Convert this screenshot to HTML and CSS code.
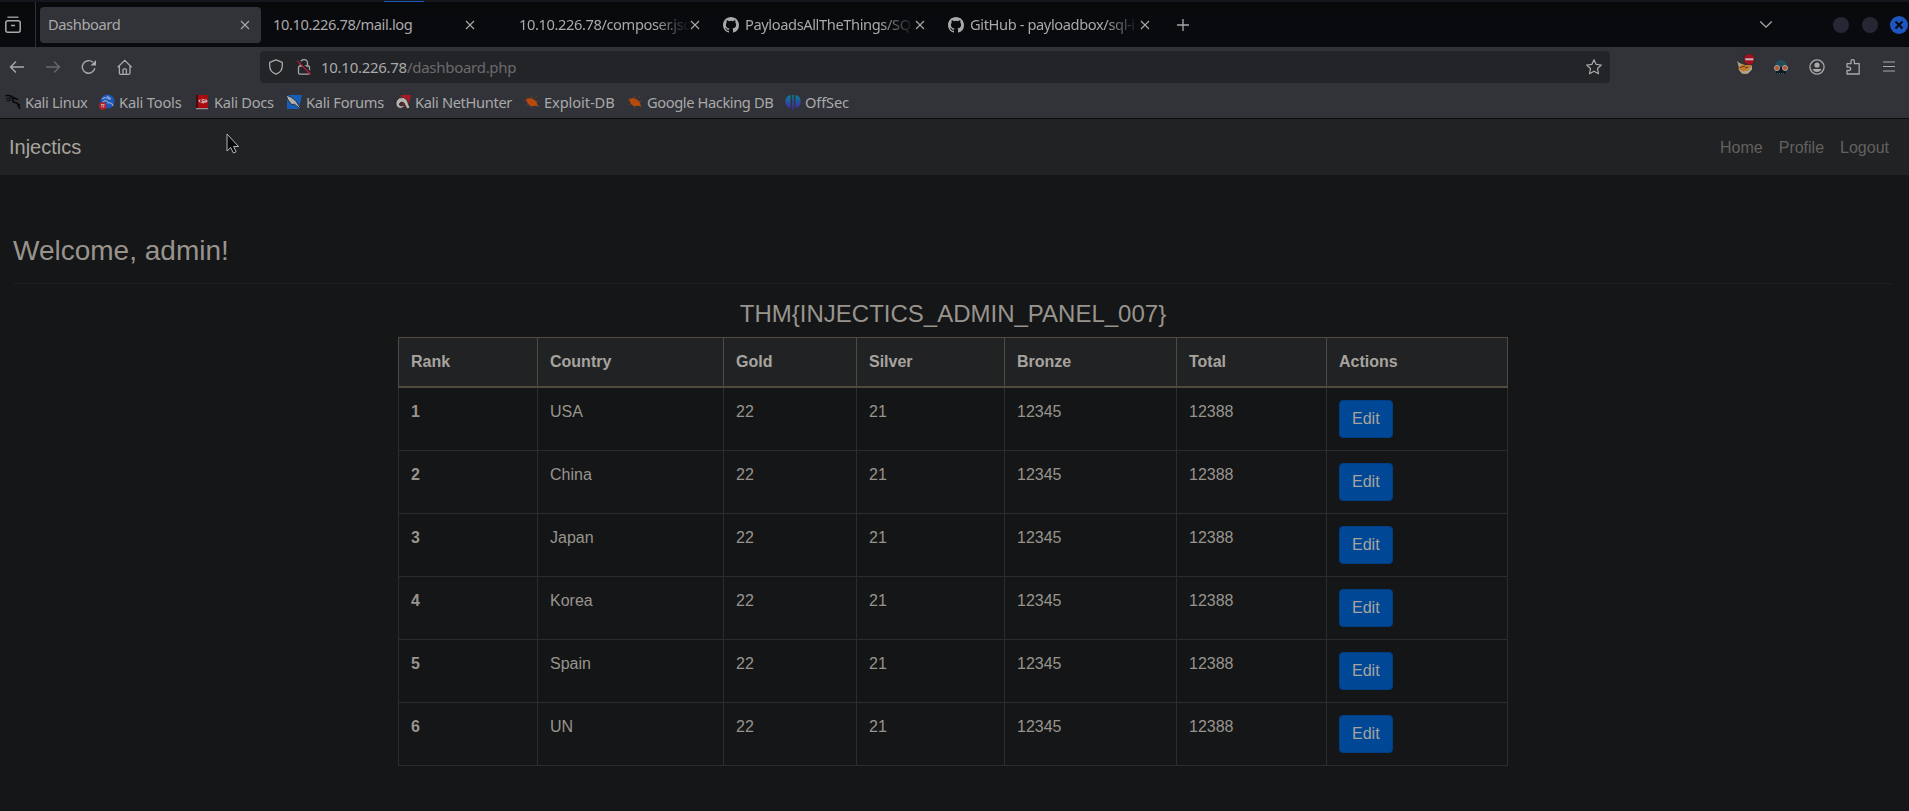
FILE: index.html
```html
<!DOCTYPE html>
<html lang="en">
<head>
<meta charset="utf-8">
<title>Dashboard</title>
<link rel="stylesheet" href="styles.css">
</head>
<body>
<svg class="defs" width="0" height="0">
  <symbol id="close" viewBox="0 0 10 10"><path d="M1 1l8 8M9 1L1 9" fill="none" stroke="currentColor" stroke-width="1.1"/></symbol>
  <symbol id="github" viewBox="0 0 16 16"><path fill="currentColor" d="M8 0C3.58 0 0 3.58 0 8c0 3.54 2.29 6.53 5.47 7.59.4.07.55-.17.55-.38 0-.19-.01-.82-.01-1.49-2.01.37-2.53-.49-2.69-.94-.09-.23-.48-.94-.82-1.13-.28-.15-.68-.52-.01-.53.63-.01 1.08.58 1.23.82.72 1.21 1.87.87 2.33.66.07-.52.28-.87.51-1.07-1.78-.2-3.64-.89-3.64-3.95 0-.87.31-1.59.82-2.15-.08-.2-.36-1.02.08-2.12 0 0 .67-.21 2.2.82a7.6 7.6 0 0 1 4 0c1.53-1.04 2.2-.82 2.2-.82.44 1.1.16 1.92.08 2.12.51.56.82 1.27.82 2.15 0 3.07-1.87 3.75-3.65 3.95.29.25.54.73.54 1.48 0 1.07-.01 1.93-.01 2.2 0 .21.15.46.55.38A8.01 8.01 0 0 0 16 8c0-4.42-3.58-8-8-8z"/></symbol>
  <symbol id="bug" viewBox="0 0 16 16"><g fill="none" stroke="#75401f" stroke-width=".8"><path d="M2 3l3 3M0 6l5 1M2 11l3-2M7 2l1 3M11 4l2-2M12 8l3-1M12 11l3 2M7 12l1 2"/></g><path fill="#b64a0d" d="M2 5.500L5.500 4l4 1.200 3 2.600 1.500 4.400-3.500-.4-3.500.4L4 10z"/></symbol>
</svg>

<div class="tabstrip">
  <div class="recent"><svg width="18" height="18" viewBox="0 0 18 18" fill="none" stroke="currentColor" stroke-width="1.500"><path d="M3.500 1.200h11" stroke-width="1.300"/><rect x="1.800" y="4.700" width="14.400" height="11.600" rx="2"/><path d="M7 9.500h4"/></svg></div>
  <div class="tab active"><span class="label">Dashboard</span><svg class="x"><use href="#close"/></svg></div>
  <div class="tab"><span class="label">10.10.226.78/mail.log</span><svg class="x"><use href="#close"/></svg></div>
  <div class="tab indent"><span class="label fade">10.10.226.78/composer.jso</span><svg class="x"><use href="#close"/></svg></div>
  <div class="tab"><svg class="fav"><use href="#github"/></svg><span class="label fade">PayloadsAllTheThings/SQ</span><svg class="x"><use href="#close"/></svg></div>
  <div class="tab"><svg class="fav"><use href="#github"/></svg><span class="label fade">GitHub - payloadbox/sql-i</span><svg class="x"><use href="#close"/></svg></div>
  <svg class="plus" width="14" height="14" viewBox="0 0 14 14"><path d="M7 1v12M1 7h12" stroke="currentColor" stroke-width="1.300"/></svg>
  <div class="winctl">
    <svg class="chev" width="14" height="9" viewBox="0 0 14 9" fill="none" stroke="currentColor" stroke-width="1.300"><path d="M1.300 1.500L7 7.200l5.700-5.700"/></svg>
    <i class="dot"></i><i class="dot"></i>
    <i class="dot closewin"><svg width="10" height="10" viewBox="0 0 10 10"><path d="M1.500 1.500l7 7M8.500 1.500l-7 7" stroke="#070a14" stroke-width="2"/></svg></i>
  </div>
</div>

<div class="toolbar">
  <div class="navicons">
    <svg width="16" height="16" viewBox="0 0 16 16" fill="none" stroke="currentColor" stroke-width="1.400"><path d="M15 8H1.500M7 2.500L1.500 8 7 13.500"/></svg>
    <svg class="off" width="16" height="16" viewBox="0 0 16 16" fill="none" stroke="currentColor" stroke-width="1.400"><path d="M1 8h13.500M9 2.500L14.500 8 9 13.500"/></svg>
    <svg width="16" height="16" viewBox="0 0 16 16"><path d="M13.800 9.200A6.300 6.300 0 1 1 11.900 3.300" fill="none" stroke="currentColor" stroke-width="1.400"/><path d="M15 1v5.500H9.500z" fill="currentColor"/></svg>
    <svg width="16" height="16" viewBox="0 0 16 16" fill="none" stroke="currentColor" stroke-width="1.300"><path d="M.700 8.300L7.700 1.300l7 7M2.400 7v7q0 1.300 1.300 1.300h8q1.300 0 1.300-1.300V7M6 15v-4.200q0-1 1-1h1.400q1 0 1 1V15"/></svg>
  </div>
  <div class="urlbar">
    <svg width="16" height="16" viewBox="0 0 16 16" fill="none" stroke="currentColor" stroke-width="1.300"><path d="M8 .900l6.300 2.500v3.300C14.300 10.500 12 13.700 8 15.200 4 13.700 1.700 10.500 1.700 6.700V3.400z" stroke-linejoin="round"/></svg>
    <svg class="lock" width="16" height="16" viewBox="0 0 16 16" fill="none"><path d="M4.500 7V4a3.500 3.500 0 0 1 7 0v3" stroke="#a5a5a6" stroke-width="1.300"/><rect x="2.500" y="7" width="11" height="8.200" rx="1.500" stroke="#a5a5a6" stroke-width="1.300"/><path d="M2 1L15 14" stroke="#232428" stroke-width="2"/><path d="M1 1.700L14.800 15.500" stroke="#c01838" stroke-width="1.200"/></svg>
    <span class="url">10.10.226.78<b>/dashboard.php</b></span>
    <svg class="star" width="16" height="16" viewBox="0 0 16 16" fill="none" stroke="currentColor" stroke-width="1.200" stroke-linejoin="round"><path d="M8 .700l2.200 4.700 5.100.6-3.800 3.500 1 5.200L8 12.200l-4.500 2.500 1-5.200L.700 6l5.100-.6z"/></svg>
  </div>
  <div class="exts">
    <svg class="fox" width="22" height="22" viewBox="0 0 22 22"><path d="M2 10l5 1 9-1-1 7-4 4H7l-4-4z" fill="#c47a2c"/><path d="M1 8l5 4-3 1.500zM2 16l4 4.500h6l4-4 0-4-4 5-5 1z" fill="#a8a49a"/><path d="M4 14.500l5-1.500M9 15l3-1" stroke="#54351c"/><rect x="7" y="1" width="13" height="11" rx="2" fill="#2c3032"/><circle cx="13.300" cy="6.300" r="5.200" fill="#a20f20"/><path d="M9.300 6.300h8" stroke="#bdbdbd" stroke-width="2"/></svg>
    <svg class="face" width="16" height="16" viewBox="0 0 16 16"><path d="M2 7Q3 1 8 1t6 6l1 3-2 5H3L1 10z" fill="#224e5b"/><path d="M3 8h10v7H3z" fill="#111b20"/><circle cx="4" cy="9" r="2.500" fill="#b6502f" stroke="#a9a6a0"/><circle cx="12" cy="9" r="2.500" fill="#b6502f" stroke="#a9a6a0"/><path d="M4 14.500h8" stroke="#2d6472" stroke-dasharray="1"/></svg>
    <svg class="acct" width="16" height="16" viewBox="0 0 16 16"><circle cx="8" cy="8" r="7.100" fill="none" stroke="currentColor" stroke-width="1.300"/><circle cx="8" cy="6" r="2.600" fill="currentColor"/><path d="M3.500 10h9q-1.300 3-4.500 3t-4.500-3z" fill="currentColor"/></svg>
    <svg class="puzzle" width="16" height="16" viewBox="0 0 16 16" fill="none" stroke="currentColor" stroke-width="1.300" stroke-linejoin="round"><path d="M2 4.700h4V2.400a1.700 1.700 0 0 1 3.400 0v2.300h4.800V15H2v-3.500h2a1.700 1.700 0 0 0 0-3.400H2z"/></svg>
    <svg width="12" height="12" viewBox="0 0 12 12"><path d="M0 1h12M0 5.500h12M0 10h12" stroke="currentColor" stroke-width="1.200"/></svg>
  </div>
</div>

<div class="bookmarks">
  <span class="bm k1"><svg viewBox="0 0 16 16" fill="none" stroke="#08090a"><path d="M0 2q6-2 9 2M1 5q5-2 8 0M2 1l8 3M2 7l4-1" stroke-width="1.200"/><path d="M9 4.500q-3 3 1 4t3 2.500l2 4M9 4l4 1.500M12 10l3 1" stroke-width="1.700"/></svg>Kali Linux</span>
  <span class="bm k2"><svg viewBox="0 0 16 16"><circle cx="8.500" cy="7.500" r="7" fill="#1d56bb"/><path d="M3 5q5-3 8 1M4 8q4-3 5 1 4-1 5 3M8 2l4 3" fill="none" stroke="#8ca5c6" stroke-width="1.200"/><circle cx="3.700" cy="12" r="3.700" fill="#b52028"/><path d="M2 10.500h3.500M2.900 10.500v3M4.700 10.500v3" stroke="#c9b9b9" stroke-width=".8"/></svg>Kali Tools</span>
  <span class="bm k3"><svg viewBox="0 0 16 16"><path d="M2 1h2v13H2z" fill="#460a0d"/><path d="M4 1h10v13H4z" fill="#a80b10"/><path d="M2 14.700h12" stroke="#aaa"/><path d="M6.400 5.600L4.800 6.700 6.400 8.500M11.400 5.500l1.600 1.700-1.600 1.300M10.600 5.800Q8 5 8 6.500t2.300.8-.8 1.600L7.300 8.500" fill="none" stroke="#c7b5b5" stroke-width="1.100"/></svg>Kali Docs</span>
  <span class="bm k4"><svg viewBox="0 0 16 16"><path d="M1 1h15l-3 14H1z" fill="#165fb8"/><path d="M0 1l5 2 5 4 5 8-2-1-5-4-2 1-4-5z" fill="#afb0ad" stroke="#1c2732" stroke-width=".9"/></svg>Kali Forums</span>
  <span class="bm k5"><svg viewBox="0 0 16 16"><path d="M6 1h10l-3 12H8z" fill="#ad1826"/><path d="M2 13Q-1 8 4 4q5-2 8 2l3 8-3 1-3-6q-2-2-4 0-2 2 1 3l3-1v2q-4 3-7 0z" fill="#b8b5b1" stroke="#21191b" stroke-width=".8"/></svg>Kali NetHunter</span>
  <span class="bm k6"><svg><use href="#bug"/></svg>Exploit-DB</span>
  <span class="bm k7"><svg><use href="#bug"/></svg>Google Hacking DB</span>
  <span class="bm k8"><svg viewBox="0 0 16 16"><defs><linearGradient id="og" gradientUnits="userSpaceOnUse" x1="0" y1="1" x2="0" y2="16"><stop offset="0" stop-color="#087f96"/><stop offset="1" stop-color="#4a1fa8"/></linearGradient></defs><path d="M5.600 1v13Q.300 13 .300 7.500T5.600 1zM10.400 1v13q5.300-1 5.300-6.500T10.400 1zM7.200 1h1.600v15H7.200z" fill="url(#og)"/></svg>OffSec</span>
</div>

<nav class="navbar">
  <a class="brand">Injectics</a>
  <div class="links"><a>Home</a><a>Profile</a><a>Logout</a></div>
</nav>

<main>
  <h3>Welcome, admin!</h3>
  <hr>
  <div class="container">
    <h4>THM{INJECTICS_ADMIN_PANEL_007}</h4>
    <table>
      <colgroup><col class="c1"><col class="c2"><col class="c3"><col class="c4"><col class="c5"><col class="c6"><col class="c7"></colgroup>
      <thead><tr><th>Rank</th><th>Country</th><th>Gold</th><th>Silver</th><th>Bronze</th><th>Total</th><th>Actions</th></tr></thead>
      <tbody>
        <tr><th>1</th><td>USA</td><td>22</td><td>21</td><td>12345</td><td>12388</td><td><a class="btn">Edit</a></td></tr>
        <tr><th>2</th><td>China</td><td>22</td><td>21</td><td>12345</td><td>12388</td><td><a class="btn">Edit</a></td></tr>
        <tr><th>3</th><td>Japan</td><td>22</td><td>21</td><td>12345</td><td>12388</td><td><a class="btn">Edit</a></td></tr>
        <tr><th>4</th><td>Korea</td><td>22</td><td>21</td><td>12345</td><td>12388</td><td><a class="btn">Edit</a></td></tr>
        <tr><th>5</th><td>Spain</td><td>22</td><td>21</td><td>12345</td><td>12388</td><td><a class="btn">Edit</a></td></tr>
        <tr><th>6</th><td>UN</td><td>22</td><td>21</td><td>12345</td><td>12388</td><td><a class="btn">Edit</a></td></tr>
      </tbody>
    </table>
  </div>
</main>
<svg class="cursor" width="14" height="22" viewBox="0 0 14 22"><path d="M1 1v17l3.700-3.500 2.700 5.500 2.700-1.200-2.500-5.300H12.500z" fill="#08090a" stroke="#b5b5b5" stroke-width="1"/></svg>
</body>
</html>
```
FILE: styles.css
```css
* { box-sizing: border-box; }
body { margin: 0; height: 811px; overflow: hidden; background: #151618; color: #98948d; font: 16px/24px "Liberation Sans", Arial, sans-serif; }
svg { display: block; flex: none; }
.defs { position: absolute; }

.tabstrip, .toolbar, .bookmarks { font-family: "Noto Sans", sans-serif; color: #a9a9aa; font-size: 14.67px; }
.tabstrip { height: 47px; background: linear-gradient(90deg, #16171e 384px, #1c57be 384px, #1c57be 424px, #16171e 424px) 0 0 / 100% 1px no-repeat, linear-gradient(#08090a, #090a0e 50%); border-top: 1px solid #16171e; display: flex; align-items: center; padding-top: 1px; }
.recent { width: 36px; height: 45px; border-right: 1px solid #303136; display: flex; align-items: center; padding-left: 4px; }
.tab { width: 221px; height: 36px; margin-left: 4px; border-radius: 4px; display: flex; align-items: center; padding: 0 11px 0 8px; white-space: nowrap; }
.tab .label { flex: 1; min-width: 0; overflow: hidden; line-height: 24px; padding-bottom: 2px; letter-spacing: -.4px; }
.tab .fade { mask-image: linear-gradient(90deg, #000 calc(100% - 34px), transparent); }
.tab.indent { padding-left: 29px; }
.active { background: #323338; }
.x { width: 10px; height: 10px; }
.fav { width: 16px; height: 16px; margin-right: 6px; }
.plus { margin-left: 15px; }
.winctl { margin-left: auto; display: flex; align-items: center; gap: 13px; }
.chev { margin-right: 47px; }
.dot { width: 16px; height: 16px; border-radius: 50%; background: #252834; display: flex; align-items: center; justify-content: center; }
.closewin { width: 18px; height: 18px; background: #1d56be; margin-right: 1px; margin-left: -1px; }

.toolbar { height: 40px; background: #323338; display: flex; align-items: center; }
.navicons { width: 260px; display: flex; gap: 20px; padding-left: 9px; }
.off { opacity: .45; }
.urlbar { width: 1350px; height: 32px; background: #232428; border-radius: 4px; display: flex; align-items: center; padding: 0 8px; }
.lock { margin: 0 9px 0 12px; }
.url { flex: 1; font-size: 15px; letter-spacing: -.28px; }
.url b { font-weight: 400; color: #6b6b6d; }
.exts { margin-left: auto; display: flex; align-items: center; padding-right: 14px; }
.fox { margin: 0 15px 6px 0; }
.face, .acct { margin-right: 20px; }
.puzzle { margin-right: 22px; }

.bookmarks { height: 32px; background: #323338; border-bottom: 1px solid #0a0b0c; display: flex; align-items: center; padding: 0 0 2px 5px; }
.bm { display: flex; align-items: center; gap: 4px; white-space: nowrap; }
.bm svg { width: 16px; height: 16px; }
.k1 { width: 94px; letter-spacing: -.35px; }
.k2 { width: 95px; letter-spacing: -.18px; }
.k3 { width: 92px; letter-spacing: -.27px; }
.k4 { width: 109px; letter-spacing: -.27px; }
.k5 { width: 129px; letter-spacing: -.35px; }
.k6 { width: 103px; letter-spacing: -.1px; }
.k7 { width: 158px; letter-spacing: -.4px; }
.k8 { letter-spacing: -.15px; }

.navbar { height: 56px; background: #212224; display: flex; align-items: center; justify-content: space-between; padding: 0 20px 0 9px; }
.brand { font-size: 20px; line-height: 30px; color: #a7a49f; }
.links { display: flex; gap: 16px; color: #62615f; padding-top: 2px; }

main { padding: 59px 16px 0 13px; }
h3 { margin: 0; font: 400 28px/34px "Liberation Sans", Arial, sans-serif; }
hr { margin: 15px 0; border: 0; border-top: 1px solid #1d1e20; }
.container { width: 1110px; margin-left: 385px; }
h4 { margin: 0 0 9px; font: 400 24px/29px "Liberation Sans", Arial, sans-serif; text-align: center; }
table { width: 1109px; table-layout: fixed; border-collapse: collapse; }
th, td { border: 1px solid #2b2c2e; padding: 12px; text-align: left; vertical-align: top; height: 63px; }
thead th { height: 49px; padding: 11px 12px 12px; background: #212224; color: #a7a49f; border: 1px solid #504a40; border-bottom-width: 2px; vertical-align: bottom; }
tbody tr:nth-child(odd) { background: #131516; }
.c1 { width: 139px; } .c2 { width: 186px; } .c3 { width: 133px; } .c4 { width: 148px; } .c5 { width: 172px; } .c6 { width: 150px; } .c7 { width: 181px; }
.btn { display: inline-block; height: 38px; padding: 6px 12px; border: 1px solid #003f86; border-radius: 4px; background: #004795; color: #a7a49f; vertical-align: middle; }
.cursor { position: absolute; left: 226px; top: 133px; }
```
